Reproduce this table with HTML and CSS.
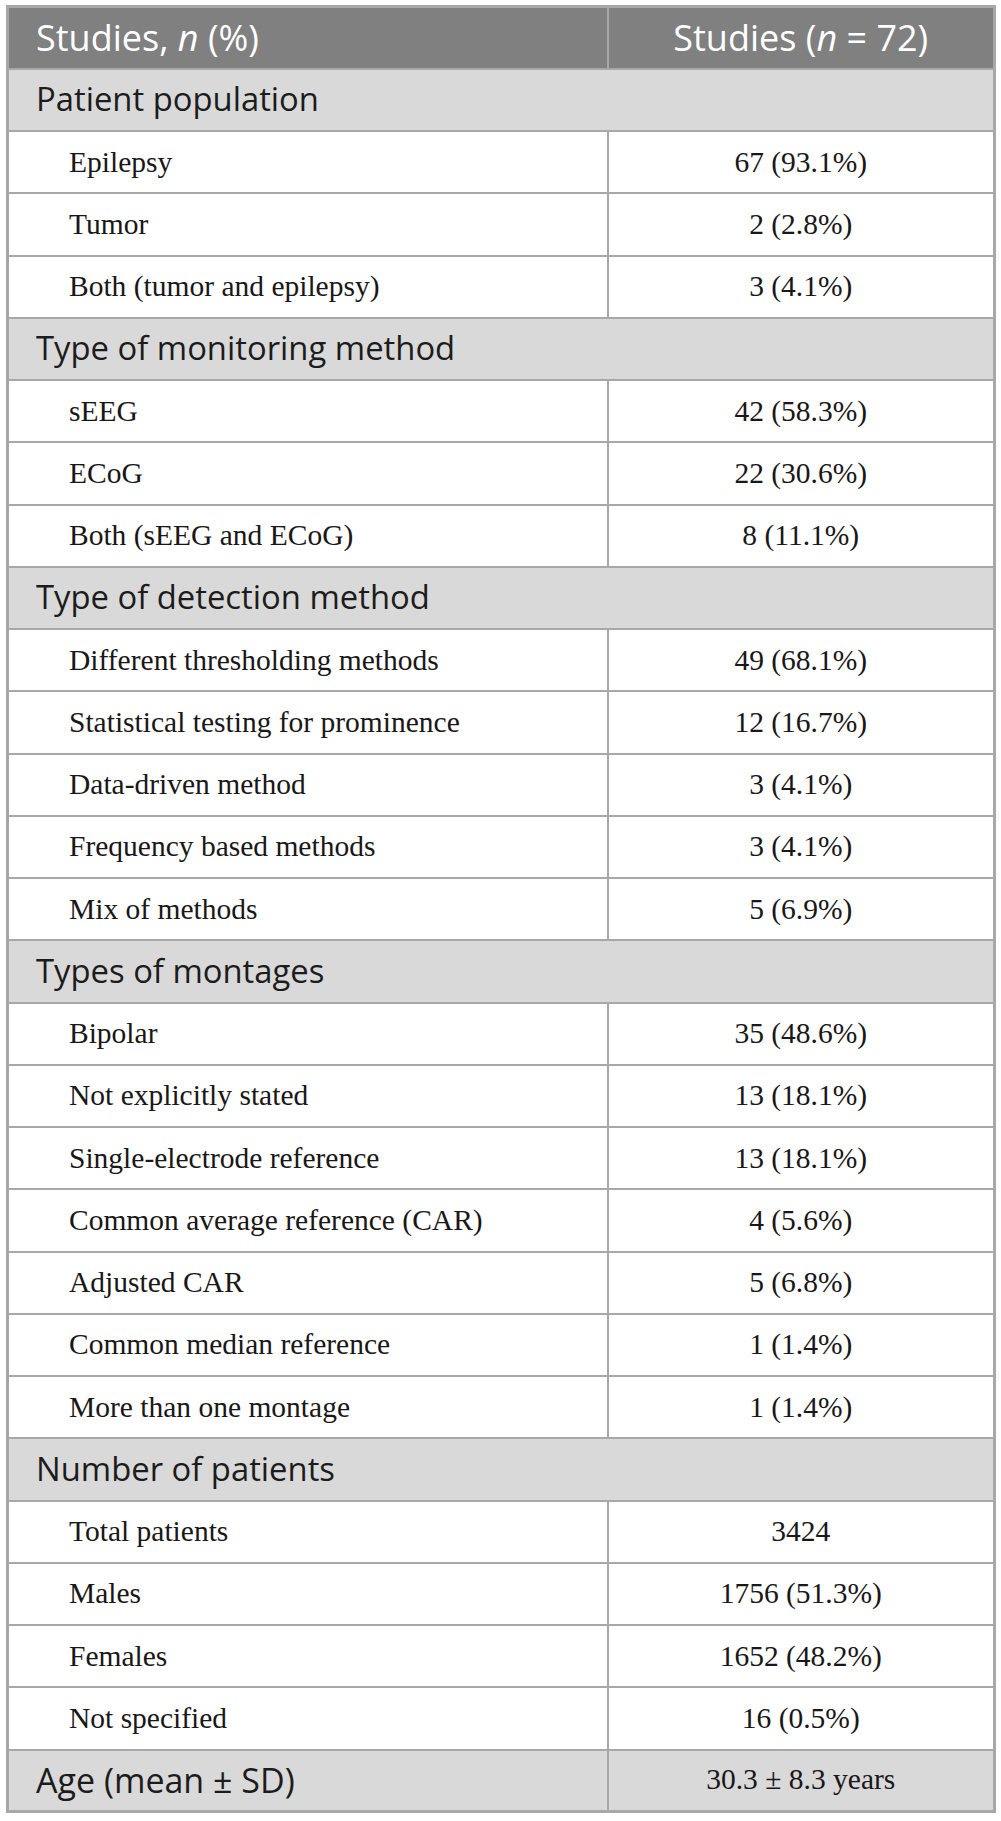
FILE: index.html
```html
<!DOCTYPE html>
<html lang="en">
<head>
<meta charset="utf-8">
<title>Studies table</title>
<link rel="stylesheet" href="styles.css">
</head>
<body>
<table class="tbl">
  <colgroup><col class="c1"><col class="c2"></colgroup>
  <thead>
    <tr class="head"><th class="h-left">Studies, <i>n</i> (%)</th><th class="h-right">Studies (<i>n</i> = 72)</th></tr>
  </thead>
  <tbody>
    <tr class="sec"><td colspan="2">Patient population</td></tr>
    <tr><td class="lbl">Epilepsy</td><td class="val">67 (93.1%)</td></tr>
    <tr><td class="lbl">Tumor</td><td class="val">2 (2.8%)</td></tr>
    <tr><td class="lbl">Both (tumor and epilepsy)</td><td class="val">3 (4.1%)</td></tr>
    <tr class="sec"><td colspan="2">Type of monitoring method</td></tr>
    <tr><td class="lbl">sEEG</td><td class="val">42 (58.3%)</td></tr>
    <tr><td class="lbl">ECoG</td><td class="val">22 (30.6%)</td></tr>
    <tr><td class="lbl">Both (sEEG and ECoG)</td><td class="val">8 (11.1%)</td></tr>
    <tr class="sec"><td colspan="2">Type of detection method</td></tr>
    <tr><td class="lbl">Different thresholding methods</td><td class="val">49 (68.1%)</td></tr>
    <tr><td class="lbl">Statistical testing for prominence</td><td class="val">12 (16.7%)</td></tr>
    <tr><td class="lbl">Data-driven method</td><td class="val">3 (4.1%)</td></tr>
    <tr><td class="lbl">Frequency based methods</td><td class="val">3 (4.1%)</td></tr>
    <tr><td class="lbl">Mix of methods</td><td class="val">5 (6.9%)</td></tr>
    <tr class="sec"><td colspan="2">Types of montages</td></tr>
    <tr><td class="lbl">Bipolar</td><td class="val">35 (48.6%)</td></tr>
    <tr><td class="lbl">Not explicitly stated</td><td class="val">13 (18.1%)</td></tr>
    <tr><td class="lbl">Single-electrode reference</td><td class="val">13 (18.1%)</td></tr>
    <tr><td class="lbl">Common average reference (CAR)</td><td class="val">4 (5.6%)</td></tr>
    <tr><td class="lbl">Adjusted CAR</td><td class="val">5 (6.8%)</td></tr>
    <tr><td class="lbl">Common median reference</td><td class="val">1 (1.4%)</td></tr>
    <tr><td class="lbl">More than one montage</td><td class="val">1 (1.4%)</td></tr>
    <tr class="sec"><td colspan="2">Number of patients</td></tr>
    <tr><td class="lbl">Total patients</td><td class="val">3424</td></tr>
    <tr><td class="lbl">Males</td><td class="val">1756 (51.3%)</td></tr>
    <tr><td class="lbl">Females</td><td class="val">1652 (48.2%)</td></tr>
    <tr><td class="lbl">Not specified</td><td class="val">16 (0.5%)</td></tr>
    <tr class="sec age"><td class="age-lbl">Age (mean ± SD)</td><td class="val age-val">30.3 ± 8.3 years</td></tr>
  </tbody>
</table>
</body>
</html>
```

FILE: styles.css
```css
html, body {
  margin: 0;
  padding: 0;
  background: #ffffff;
}

body {
  padding: 5px 0 0 6px;
}

.tbl {
  width: 987px;
  border-collapse: collapse;
  border: 3px solid #a8a8a8;
  table-layout: fixed;
}

.c1 { width: 600px; }
.c2 { width: 387px; }

.tbl tr {
  height: 62.25px;
}

.tbl th,
.tbl td {
  border: 2px solid #a8a8a8;
  padding: 0;
  vertical-align: middle;
}

.tbl .head th {
  background: #808080;
  color: #ffffff;
  font-family: "Open Sans", "Liberation Sans", sans-serif;
  font-weight: 400;
  font-size: 36px;
  line-height: 1;
}

.tbl .head .h-left {
  text-align: left;
  padding-left: 27px;
}

.tbl .head .h-right {
  text-align: center;
}

.tbl .sec td {
  background: #d9d9d9;
  color: #1c1c1c;
  font-family: "Open Sans", "Liberation Sans", sans-serif;
  font-size: 32.8px;
  line-height: 1;
  padding-left: 27px;
}

.tbl .lbl {
  font-family: "Liberation Serif", "Times New Roman", serif;
  font-size: 29.5px;
  color: #1a1718;
  padding-left: 60px;
}

.tbl .val {
  font-family: "Liberation Serif", "Times New Roman", serif;
  font-size: 29.5px;
  color: #1a1718;
  text-align: center;
}

.tbl .sec .age-lbl {
  font-size: 34px;
}

.tbl .sec .age-val {
  font-family: "Liberation Serif", "Times New Roman", serif;
  font-size: 29.5px;
  line-height: 1.15;
  padding-left: 0;
  color: #1a1718;
}
```
